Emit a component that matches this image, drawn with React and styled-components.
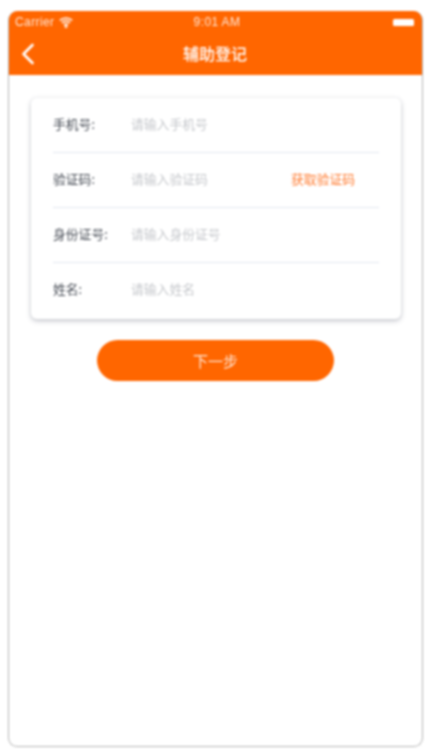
import React from "react";
import styled, { createGlobalStyle } from "styled-components";

const GlobalStyle = createGlobalStyle`
  html, body {
    margin: 0;
    padding: 0;
    background: #ffffff;
  }
  body {
    font-family: "Noto Sans CJK SC", "Liberation Sans", sans-serif;
  }
`;

const Page = styled.div`
  width: 428px;
  height: 753px;
  padding: 11px 5px 6px 8px;
  box-sizing: border-box;
  overflow: hidden;
`;

const Phone = styled.div`
  height: 100%;
  box-sizing: border-box;
  border: 1px solid #b4b4b4;
  border-top: 0;
  border-radius: 9px;
  overflow: hidden;
  background: #fff;
  filter: blur(0.85px);
`;

const Header = styled.header`
  background: #ff6600;
  margin: 0 -1px;
  height: 64px;
  color: #fff;
`;

const StatusBar = styled.div`
  height: 22px;
  padding: 0 4px 0 7px;
  display: grid;
  grid-template-columns: 1fr auto 1fr;
  align-items: center;
  font-family: "Liberation Sans", sans-serif;
  font-size: 12px;
  letter-spacing: 0.4px;
  color: rgba(255, 255, 255, 0.85);
`;

const Carrier = styled.div`
  display: flex;
  align-items: center;
  gap: 5px;
`;

const Battery = styled.div`
  justify-self: end;
  width: 21px;
  height: 7px;
  background: #fff;
  border-radius: 1.5px;
  margin-right: 5px;
`;

const NavBar = styled.div`
  height: 42px;
  padding: 0 13px;
  display: grid;
  grid-template-columns: 39px 1fr 40px;
  align-items: center;
`;

const Title = styled.h1`
  margin: 0 0 2px;
  font-size: 16px;
  font-weight: 500;
  line-height: 22px;
  text-align: center;
`;

const Card = styled.section`
  margin: 23px 21px 0 22px;
  padding: 0 22px;
  height: 221px;
  box-sizing: border-box;
  background: #fff;
  border-radius: 6px;
  box-shadow: 0 2px 5px rgba(90, 95, 115, 0.34), 0 0 4px rgba(90, 95, 115, 0.06);
`;

const Row = styled.div`
  height: 55px;
  padding-bottom: 4px;
  display: flex;
  align-items: center;
  box-sizing: border-box;
  font-size: 12.8px;
  border-bottom: ${(p) => (p.$last ? "0" : "1px solid #e2e6f0")};
`;

const Label = styled.span`
  width: 78px;
  flex: none;
  color: #4a4f58;
`;

const Placeholder = styled.span`
  flex: 1;
  color: #c6c8cc;
`;

const CodeLink = styled.span`
  color: #ff7d33;
  margin-right: 24px;
`;

const NextButton = styled.button`
  display: block;
  width: 237px;
  height: 41px;
  margin: 21px 0 0 88px;
  border: 0;
  border-radius: 21px;
  background: #ff6600;
  color: rgba(255, 255, 255, 0.85);
  font-family: inherit;
  font-size: 15px;
`;

const rows = [
  { label: "手机号:", placeholder: "请输入手机号" },
  { label: "验证码:", placeholder: "请输入验证码", code: true },
  { label: "身份证号:", placeholder: "请输入身份证号" },
  { label: "姓名:", placeholder: "请输入姓名" },
];

function WifiIcon() {
  return (
    <svg width="14" height="11" viewBox="0 0 14 11" fill="none" stroke="#fff" strokeOpacity="0.9" strokeWidth="1.9">
      <path d="M.8 3.4C4.4 .3 9.6 .3 13.2 3.4" />
      <path d="M3 5.8c2.3-2 5.7-2 8 0" />
      <path d="M5.1 8c1.1-.9 2.7-.9 3.8 0" />
      <circle cx="7" cy="9.7" r=".5" fill="#fff" />
    </svg>
  );
}

function BackIcon() {
  return (
    <svg width="14" height="24" viewBox="0 0 14 24" fill="none" stroke="#fff" strokeWidth="2.6" strokeLinecap="round" strokeLinejoin="round">
      <path d="M11.5 3 2.5 12l9 9" />
    </svg>
  );
}

export default function App() {
  return (
    <>
      <GlobalStyle />
      <Page>
        <Phone>
          <Header>
            <StatusBar>
              <Carrier>
                Carrier
                <WifiIcon />
              </Carrier>
              <span>9:01 AM</span>
              <Battery />
            </StatusBar>
            <NavBar>
              <BackIcon />
              <Title>辅助登记</Title>
            </NavBar>
          </Header>
          <Card>
            {rows.map((row, i) => (
              <Row key={row.label} $last={i === rows.length - 1}>
                <Label>{row.label}</Label>
                <Placeholder>{row.placeholder}</Placeholder>
                {row.code && <CodeLink>获取验证码</CodeLink>}
              </Row>
            ))}
          </Card>
          <NextButton>下一步</NextButton>
        </Phone>
      </Page>
    </>
  );
}
